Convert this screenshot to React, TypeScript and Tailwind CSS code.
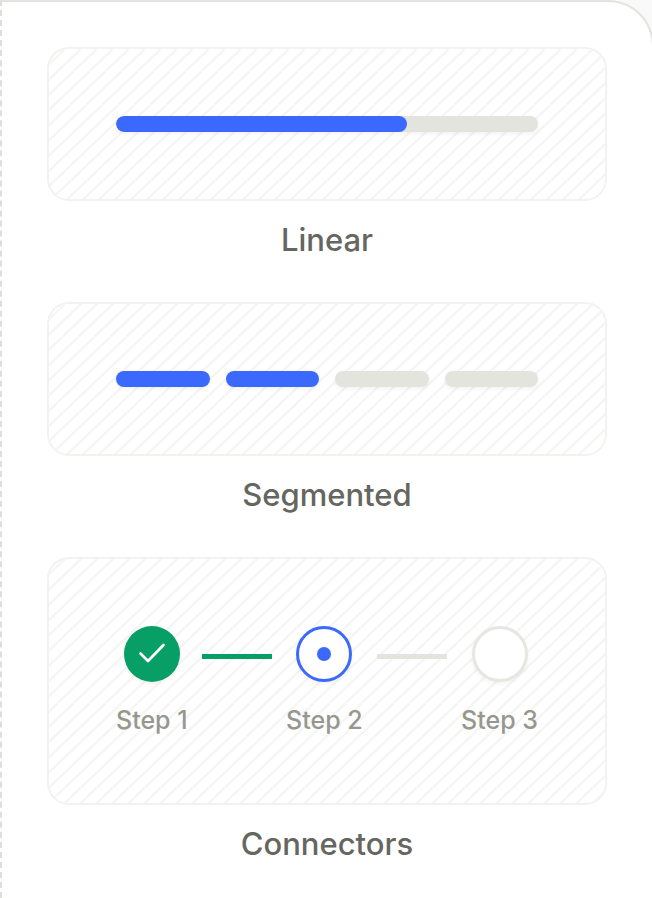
import React from "react";
import { clsx } from "clsx";

interface PreviewProps {
  label: string;
  children: React.ReactNode;
}

const STRIPE_GAP = 16;
const stripes = Array.from({ length: 160 }, (_, i) => i * STRIPE_GAP);

// Diagonal hatching behind each preview
const Hatch = () => (
  <svg className="absolute inset-0 size-full" aria-hidden="true">
    <path
      d={stripes.map((x) => `M${x} 0l-1680 1600`).join("")}
      stroke="#f5f5f4"
      strokeWidth="2.4"
    />
  </svg>
);

const Preview = ({ label, children }: PreviewProps) => (
  <figure>
    <div className="relative overflow-hidden rounded-[22px] border-2 border-[#f2f2f1] p-[67px]">
      <Hatch />
      <div className="relative">{children}</div>
    </div>
    <figcaption className="mt-[19px] text-center text-[31px] leading-10 text-[#65665f]">
      {label}
    </figcaption>
  </figure>
);

const LinearProgress = ({ value }: { value: number }) => (
  <div
    role="progressbar"
    aria-label="Linear"
    aria-valuenow={value}
    className="h-4 overflow-hidden rounded-full bg-[#e3e4de] shadow-[0_2px_4px_rgba(0,0,0,0.05)]"
  >
    <div className="h-full rounded-full bg-[#3b68fd]" style={{ width: `${value}%` }} />
  </div>
);

const SegmentedProgress = ({ value, total }: { value: number; total: number }) => (
  <div
    role="progressbar"
    aria-label="Segmented"
    aria-valuenow={value}
    aria-valuemax={total}
    className="flex gap-4"
  >
    {Array.from({ length: total }, (_, i) => (
      <div
        key={i}
        className={clsx(
          "h-4 flex-1 rounded-full shadow-[0_2px_4px_rgba(0,0,0,0.05)]",
          i < value ? "bg-[#3b68fd]" : "bg-[#e3e4de]"
        )}
      />
    ))}
  </div>
);

type StepState = "done" | "current" | "upcoming";

const steps: { label: string; state: StepState }[] = [
  { label: "Step 1", state: "done" },
  { label: "Step 2", state: "current" },
  { label: "Step 3", state: "upcoming" },
];

const StepMarker = ({ state }: { state: StepState }) => (
  <div
    className={clsx(
      "flex size-14 items-center justify-center rounded-full shadow-[0_2px_4px_rgba(0,0,0,0.05)]",
      state === "done" && "bg-[#089f67]",
      state === "current" && "border-3 border-[#3b68fd] bg-white",
      state === "upcoming" && "border-3 border-[#e6e6e2] bg-white"
    )}
  >
    {state === "done" && (
      <svg viewBox="0 0 56 56" className="size-14" fill="none" aria-hidden="true">
        <path
          d="M16.5 27.5L24 35L39.5 19"
          stroke="white"
          strokeWidth="2.6"
          strokeLinecap="round"
          strokeLinejoin="round"
        />
      </svg>
    )}
    {state === "current" && <div className="size-3.5 rounded-full bg-[#3b68fd]" />}
  </div>
);

const Stepper = () => (
  <ol className="flex items-start gap-3.5">
    {steps.map((step, i) => (
      <React.Fragment key={step.label}>
        {i > 0 && (
          <li
            aria-hidden="true"
            className={clsx(
              "mt-7 h-[5px] flex-1",
              steps[i - 1].state === "done" ? "bg-[#089f67]" : "bg-[#e3e4de]"
            )}
          />
        )}
        <li className="flex flex-col items-center">
          <StepMarker state={step.state} />
          <span className="mt-[22px] text-[25px] leading-8 whitespace-nowrap text-[#96978e]">
            {step.label}
          </span>
        </li>
      </React.Fragment>
    ))}
  </ol>
);

export default function App() {
  return (
    <div className="min-h-screen overflow-hidden bg-[#f9f9f9] font-['Inter',sans-serif] font-medium">
      <main className="-mr-0.5 flex min-h-screen flex-col gap-[42px] rounded-tr-[46px] border-t-2 border-r-2 border-l-2 border-[#e3e4de] border-l-[#dedfd9] bg-white px-[45px] pt-[45px] pb-8 [border-left-style:dashed]">
        <Preview label="Linear">
          <LinearProgress value={69} />
        </Preview>
        <Preview label="Segmented">
          <SegmentedProgress value={2} total={4} />
        </Preview>
        <Preview label="Connectors">
          <Stepper />
        </Preview>
      </main>
    </div>
  );
}
